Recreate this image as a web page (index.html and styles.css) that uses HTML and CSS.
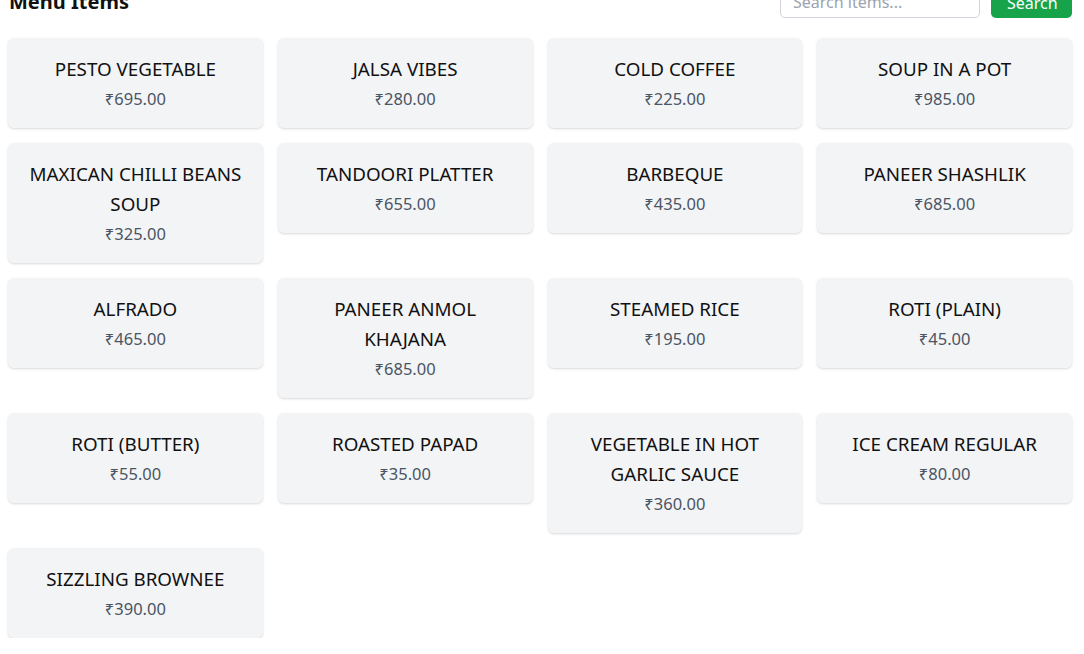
FILE: index.html
```html
<!DOCTYPE html>
<html lang="en">
<head>
<meta charset="utf-8">
<title>Menu Items</title>
<link rel="stylesheet" href="styles.css">
</head>
<body>
<div class="page">
  <div class="header">
    <h2 class="title">Menu Items</h2>
    <form class="search">
      <input class="search-input" type="text" placeholder="Search items...">
      <button class="search-btn" type="button">Search</button>
    </form>
  </div>
  <div class="grid">
    <div class="card"><div class="name">PESTO VEGETABLE</div><div class="price">₹695.00</div></div>
    <div class="card"><div class="name">JALSA VIBES</div><div class="price">₹280.00</div></div>
    <div class="card"><div class="name">COLD COFFEE</div><div class="price">₹225.00</div></div>
    <div class="card"><div class="name">SOUP IN A POT</div><div class="price">₹985.00</div></div>
    <div class="card"><div class="name">MAXICAN CHILLI BEANS SOUP</div><div class="price">₹325.00</div></div>
    <div class="card"><div class="name">TANDOORI PLATTER</div><div class="price">₹655.00</div></div>
    <div class="card"><div class="name">BARBEQUE</div><div class="price">₹435.00</div></div>
    <div class="card"><div class="name">PANEER SHASHLIK</div><div class="price">₹685.00</div></div>
    <div class="card"><div class="name">ALFRADO</div><div class="price">₹465.00</div></div>
    <div class="card"><div class="name">PANEER ANMOL KHAJANA</div><div class="price">₹685.00</div></div>
    <div class="card"><div class="name">STEAMED RICE</div><div class="price">₹195.00</div></div>
    <div class="card"><div class="name">ROTI (PLAIN)</div><div class="price">₹45.00</div></div>
    <div class="card"><div class="name">ROTI (BUTTER)</div><div class="price">₹55.00</div></div>
    <div class="card"><div class="name">ROASTED PAPAD</div><div class="price">₹35.00</div></div>
    <div class="card"><div class="name">VEGETABLE IN HOT GARLIC SAUCE</div><div class="price">₹360.00</div></div>
    <div class="card"><div class="name">ICE CREAM REGULAR</div><div class="price">₹80.00</div></div>
    <div class="card"><div class="name">SIZZLING BROWNEE</div><div class="price">₹390.00</div></div>
  </div>
</div>
</body>
</html>
```

FILE: styles.css
```css
* { box-sizing: border-box; }
html, body { margin: 0; padding: 0; background: #ffffff; }
body {
  font-family: "Noto Sans", "Open Sans", "DejaVu Sans", sans-serif;
  color: #111111;
  overflow: hidden;
}
.page {
  padding: 0 12px 0 8px;
  margin-top: -16px;
}
.header {
  display: flex;
  justify-content: space-between;
  align-items: center;
  height: 34px;
  margin-bottom: 20px;
}
.title {
  margin: 0;
  font-size: 20px;
  line-height: 28px;
  font-weight: 700;
  color: #111111;
  padding-left: 1px;
  padding-top: 2px;
}
.search {
  display: flex;
  align-items: center;
  gap: 11px;
  margin: 0;
}
.search-input {
  width: 200px;
  height: 34px;
  border: 1px solid #d1d5db;
  border-radius: 5px;
  padding: 2px 12px 0;
  font-family: inherit;
  font-size: 16px;
  color: #111;
  outline: none;
}
.search-input::placeholder { color: #9ca3af; }
.search-btn {
  width: 81px;
  height: 34px;
  border: none;
  border-radius: 5px;
  background: #16a34a;
  color: #ffffff;
  font-family: inherit;
  font-size: 16px;
  padding: 3px 16px 0;
}
.grid {
  display: grid;
  grid-template-columns: repeat(4, 1fr);
  gap: 15px;
  align-items: start;
}
.card {
  background: #f3f4f6;
  border-radius: 6px;
  box-shadow: 0 1px 3px rgba(0,0,0,0.10), 0 1px 2px rgba(0,0,0,0.06);
  padding: 16px 16px 14px;
  text-align: center;
}
.name {
  font-size: 18.8px;
  line-height: 30px;
  color: #111111;
}
.price {
  font-size: 16.5px;
  line-height: 30px;
  color: #4b5563;
}
```
